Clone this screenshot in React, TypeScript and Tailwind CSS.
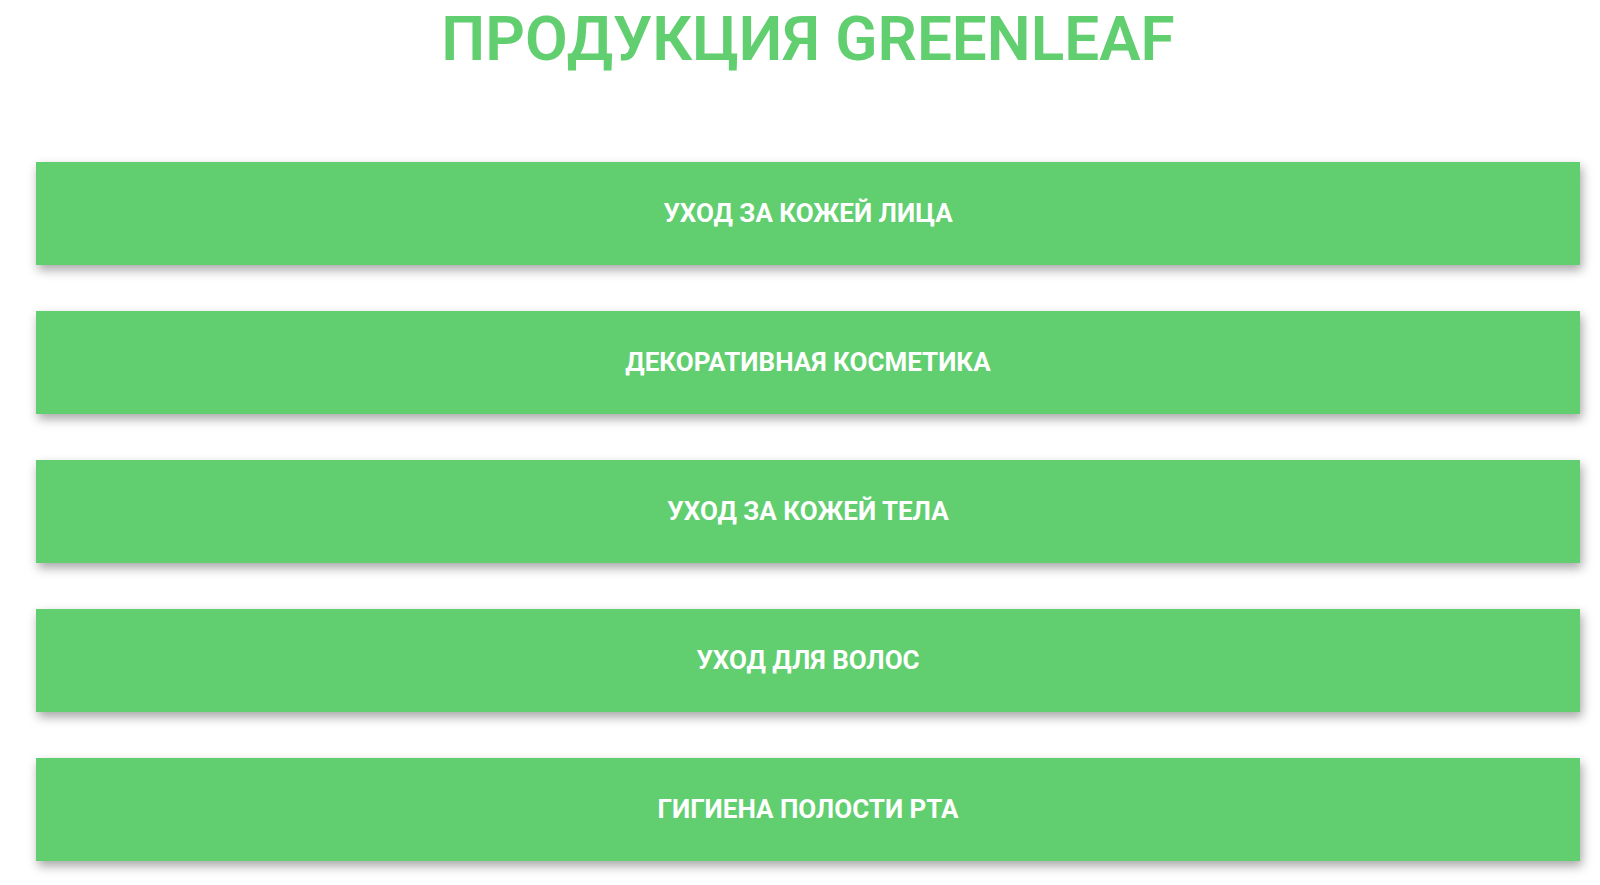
import React from 'react';

const categories = [
  'Уход за кожей лица',
  'Декоративная косметика',
  'Уход за кожей тела',
  'Уход для волос',
  'Гигиена полости рта',
];

const App: React.FC = () => {
  return (
    <div className="min-h-screen bg-white pl-[36px] pr-[20px] font-['Roboto',sans-serif]">
      <h1 className="pt-[2px] text-center text-[62px] font-semibold uppercase leading-[74px] text-[#61ce70]">
        Продукция Greenleaf
      </h1>

      {/* category buttons */}
      <div className="mt-[86px] flex flex-col gap-[46px]">
        {categories.map(c => (
          <a
            key={c}
            href="#"
            className="flex h-[103px] items-center justify-center bg-[#61ce70] text-[26px] font-bold uppercase text-white shadow-[2px_5px_10px_rgba(0,0,0,0.35)]"
          >
            {c}
          </a>
        ))}
      </div>
    </div>
  );
};

export default App;
